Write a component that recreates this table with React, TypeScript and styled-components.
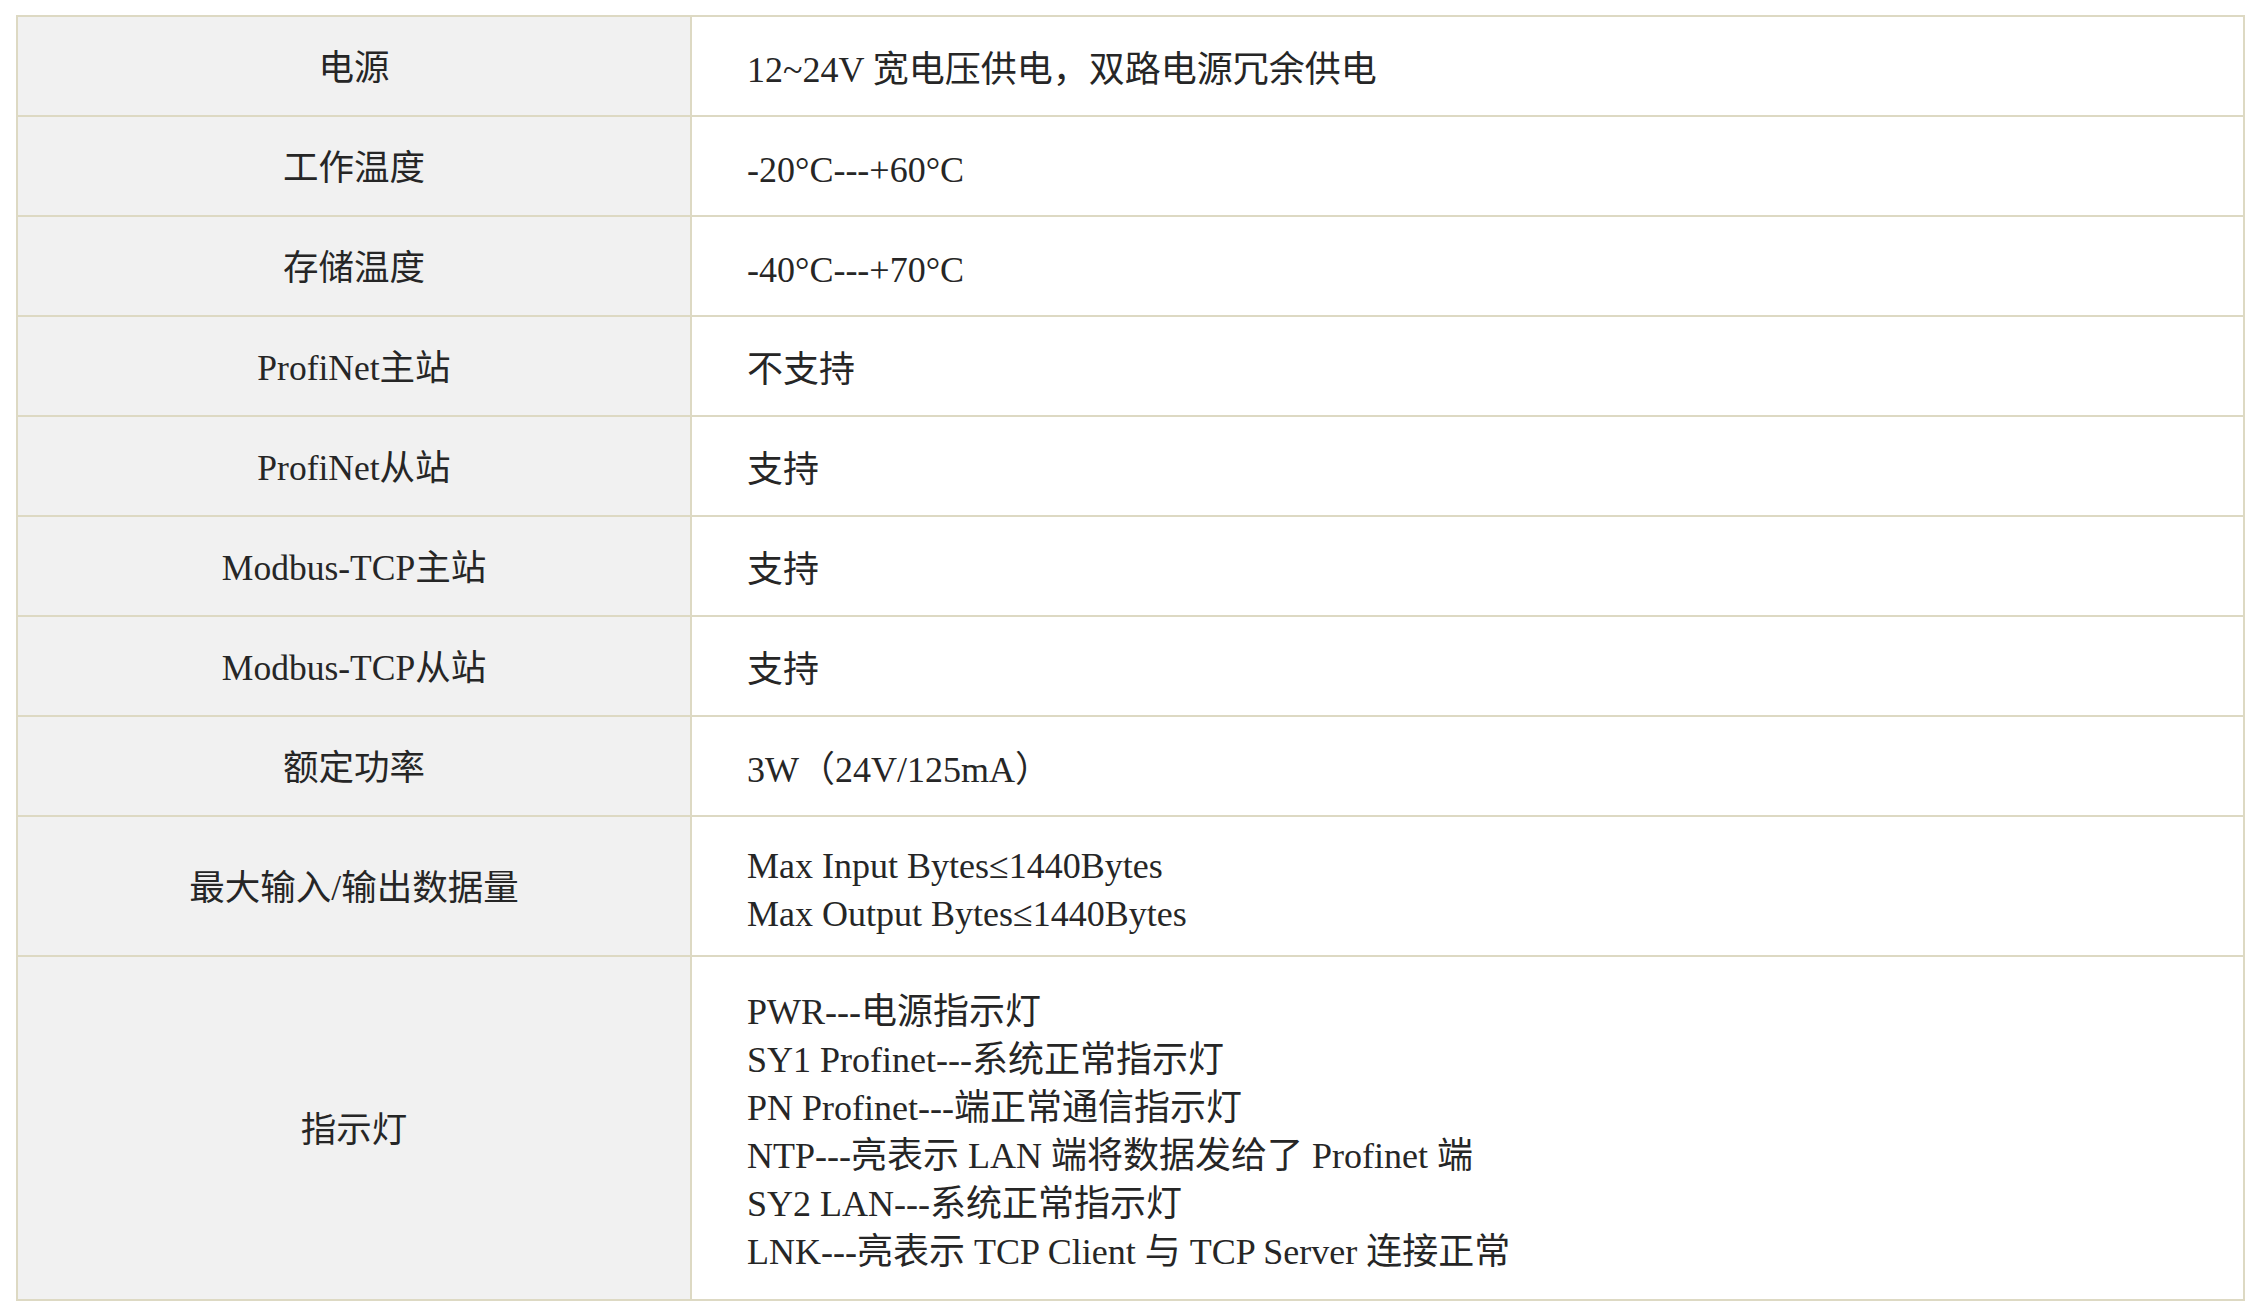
import { FC } from "react";
import styled, { createGlobalStyle } from "styled-components";

const GlobalStyle = createGlobalStyle`
  html, body {
    margin: 0;
    padding: 0;
    background: #ffffff;
  }
`;

const colors = {
  border: "#ddd9c3",
  labelBack: "#f1f1f1",
  text: "#262626",
};

const PageStyled = styled.div`
  padding: 15px 15px 15px 16px;
  font-family: "Liberation Serif", "Noto Sans CJK SC", serif;
  color: ${colors.text};
`;

const TableStyled = styled.table`
  width: 2229px;
  border-collapse: collapse;
  table-layout: fixed;
  border: 2px solid ${colors.border};
`;

const LabelCell = styled.td`
  width: 672px;
  background-color: ${colors.labelBack};
  border: 2px solid ${colors.border};
  text-align: center;
  font-size: 35.5px;
  line-height: 48px;
  padding: 4px 0 0;
`;

interface IValueCell {
  $pad: number;
}

// top padding is a bit bigger than bottom: text sits slightly low in the rows
const ValueCell = styled.td<IValueCell>`
  border: 2px solid ${colors.border};
  background-color: #ffffff;
  text-align: left;
  font-size: 36px;
  line-height: 48px;
  padding: ${(p) => p.$pad + 4}px 20px ${(p) => p.$pad - 4}px 55px;
`;

const Line = styled.div`
  white-space: nowrap;
`;

interface ISpec {
  label: string;
  lines: string[];
  pad: number;
}

const specs: ISpec[] = [
  { label: "电源", lines: ["12~24V 宽电压供电，双路电源冗余供电"], pad: 25 },
  { label: "工作温度", lines: ["-20°C---+60°C"], pad: 25 },
  { label: "存储温度", lines: ["-40°C---+70°C"], pad: 25 },
  { label: "ProfiNet主站", lines: ["不支持"], pad: 25 },
  { label: "ProfiNet从站", lines: ["支持"], pad: 25 },
  { label: "Modbus-TCP主站", lines: ["支持"], pad: 25 },
  { label: "Modbus-TCP从站", lines: ["支持"], pad: 25 },
  { label: "额定功率", lines: ["3W（24V/125mA）"], pad: 25 },
  {
    label: "最大输入/输出数据量",
    lines: ["Max Input Bytes≤1440Bytes", "Max Output Bytes≤1440Bytes"],
    pad: 21,
  },
  {
    label: "指示灯",
    lines: [
      "PWR---电源指示灯",
      "SY1 Profinet---系统正常指示灯",
      "PN Profinet---端正常通信指示灯",
      "NTP---亮表示 LAN 端将数据发给了 Profinet 端",
      "SY2 LAN---系统正常指示灯",
      "LNK---亮表示 TCP Client 与 TCP Server 连接正常",
    ],
    pad: 27,
  },
];

const SpecTable: FC<{ items: ISpec[] }> = ({ items }) => (
  <TableStyled>
    <tbody>
      {items.map((item) => (
        <tr key={item.label}>
          <LabelCell>{item.label}</LabelCell>
          <ValueCell $pad={item.pad}>
            {item.lines.map((line) => (
              <Line key={line}>{line}</Line>
            ))}
          </ValueCell>
        </tr>
      ))}
    </tbody>
  </TableStyled>
);

export default function App() {
  return (
    <PageStyled>
      <GlobalStyle />
      <SpecTable items={specs} />
    </PageStyled>
  );
}
